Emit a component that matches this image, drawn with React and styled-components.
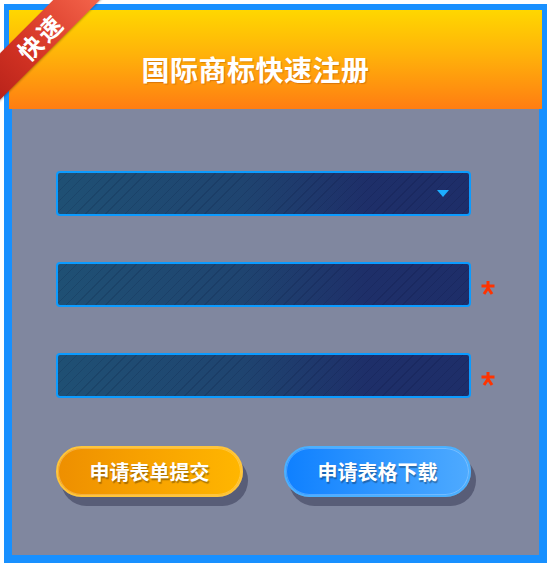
import React from "react";
import styled, { createGlobalStyle } from "styled-components";

const GlobalStyle = createGlobalStyle`
  html, body {
    margin: 0;
    padding: 0;
    background: #ffffff;
  }
  body {
    font-family: "Noto Sans CJK SC", "Noto Sans", sans-serif;
  }
`;

const Page = styled.div`
  position: relative;
  padding: 4px 0 0 4px;
  width: 547px;
  height: 563px;
  box-sizing: border-box;
  overflow: hidden;
`;

const Frame = styled.div`
  box-sizing: border-box;
  width: 543px;
  height: 559px;
  border: 8px solid #1890ff;
  background: #80879f;
  display: flex;
  flex-direction: column;
`;

const Header = styled.div`
  margin: -2px -3px 0 -3px;
  height: 99px;
  flex: none;
  background: linear-gradient(to bottom, #ffd700 0%, #ffb20a 45%, #ff7d12 100%);
  display: flex;
  align-items: center;
  justify-content: center;
  padding: 18px 40px 0 0;
  box-sizing: border-box;
`;

const Title = styled.h1`
  margin: 0;
  font-size: 28px;
  font-weight: 700;
  color: #ffffff;
  letter-spacing: 0.5px;
  text-shadow: 1px 1px 1px rgba(150, 60, 0, 0.35);
`;

const Ribbon = styled.div`
  position: absolute;
  left: -36px;
  top: 21px;
  width: 150px;
  height: 33px;
  transform: rotate(-45deg);
  background: linear-gradient(to right, #b8221a 0%, #d43424 40%, #f6674d 100%);
  box-shadow: 0 1px 2px rgba(0, 0, 0, 0.25);
  display: flex;
  align-items: center;
  justify-content: center;
  color: #ffffff;
  font-size: 24px;
  font-weight: 700;
  letter-spacing: 3px;
  text-indent: 3px;
`;

const Body = styled.div`
  flex: 1;
  display: flex;
  flex-direction: column;
  padding: 62px 0 0 44px;
  gap: 46px;
`;

const Row = styled.div`
  display: flex;
  align-items: center;
  gap: 10px;
`;

const Field = styled.div`
  position: relative;
  box-sizing: border-box;
  width: 415px;
  height: 45px;
  border: 2px solid #0b9bff;
  border-radius: 4px;
  background:
    repeating-linear-gradient(
      135deg,
      rgba(0, 0, 0, 0) 0px,
      rgba(0, 0, 0, 0) 6px,
      rgba(0, 0, 30, 0.12) 6px,
      rgba(0, 0, 30, 0.12) 7px
    ),
    linear-gradient(to right, #1f5074 0%, #1f4470 45%, #1e2f69 75%, #1e2e69 100%);
`;

const Caret = styled.span`
  position: absolute;
  right: 20px;
  top: 50%;
  margin-top: -4px;
  width: 0;
  height: 0;
  border-left: 6px solid transparent;
  border-right: 6px solid transparent;
  border-top: 7px solid #1caeff;
`;

const Star = styled.span`
  width: 14px;
  height: 14px;
  display: flex;
  align-items: center;
  justify-content: center;
  margin-top: 6px;
`;

const Buttons = styled.div`
  display: flex;
  gap: 41px;
  margin-top: 2px;
`;

const Button = styled.button`
  box-sizing: border-box;
  width: 187px;
  height: 51px;
  border-radius: 26px;
  border: 2px solid ${(p) => (p.$tone === "orange" ? "#ffc53a" : "#4bb0ff")};
  background: ${(p) =>
    p.$tone === "orange"
      ? "linear-gradient(to right, #ee8f00 0%, #f8a300 50%, #ffb600 100%)"
      : "linear-gradient(to right, #0f80ff 0%, #2f96ff 50%, #4eaaff 100%)"};
  box-shadow: 5px 9px 0 #585d77,
    inset 0 0 0 1px rgba(255, 255, 255, 0.25);
  color: #ffffff;
  font-family: "Noto Sans CJK SC", "Noto Sans", sans-serif;
  font-size: 20px;
  font-weight: 700;
  text-shadow: 1px 2px 1px rgba(0, 0, 0, 0.3);
  padding: 0;
  cursor: pointer;
`;

function Asterisk() {
  return (
    <Star>
      <svg width="14" height="14" viewBox="0 0 14 14">
        <g stroke="#ff3300" strokeWidth="3" strokeLinecap="butt">
          <line x1="7" y1="0" x2="7" y2="7" />
          <line x1="0.5" y1="5" x2="13.5" y2="5" />
          <line x1="7" y1="7" x2="3" y2="13" />
          <line x1="7" y1="7" x2="11" y2="13" />
        </g>
      </svg>
    </Star>
  );
}

export default function App() {
  return (
    <>
      <GlobalStyle />
      <Page>
        <Frame>
          <Header>
            <Title>国际商标快速注册</Title>
          </Header>
          <Body>
            <Row>
              <Field>
                <Caret />
              </Field>
            </Row>
            <Row>
              <Field />
              <Asterisk />
            </Row>
            <Row>
              <Field />
              <Asterisk />
            </Row>
            <Buttons>
              <Button $tone="orange">申请表单提交</Button>
              <Button $tone="blue">申请表格下载</Button>
            </Buttons>
          </Body>
        </Frame>
        <Ribbon>快速</Ribbon>
      </Page>
    </>
  );
}
